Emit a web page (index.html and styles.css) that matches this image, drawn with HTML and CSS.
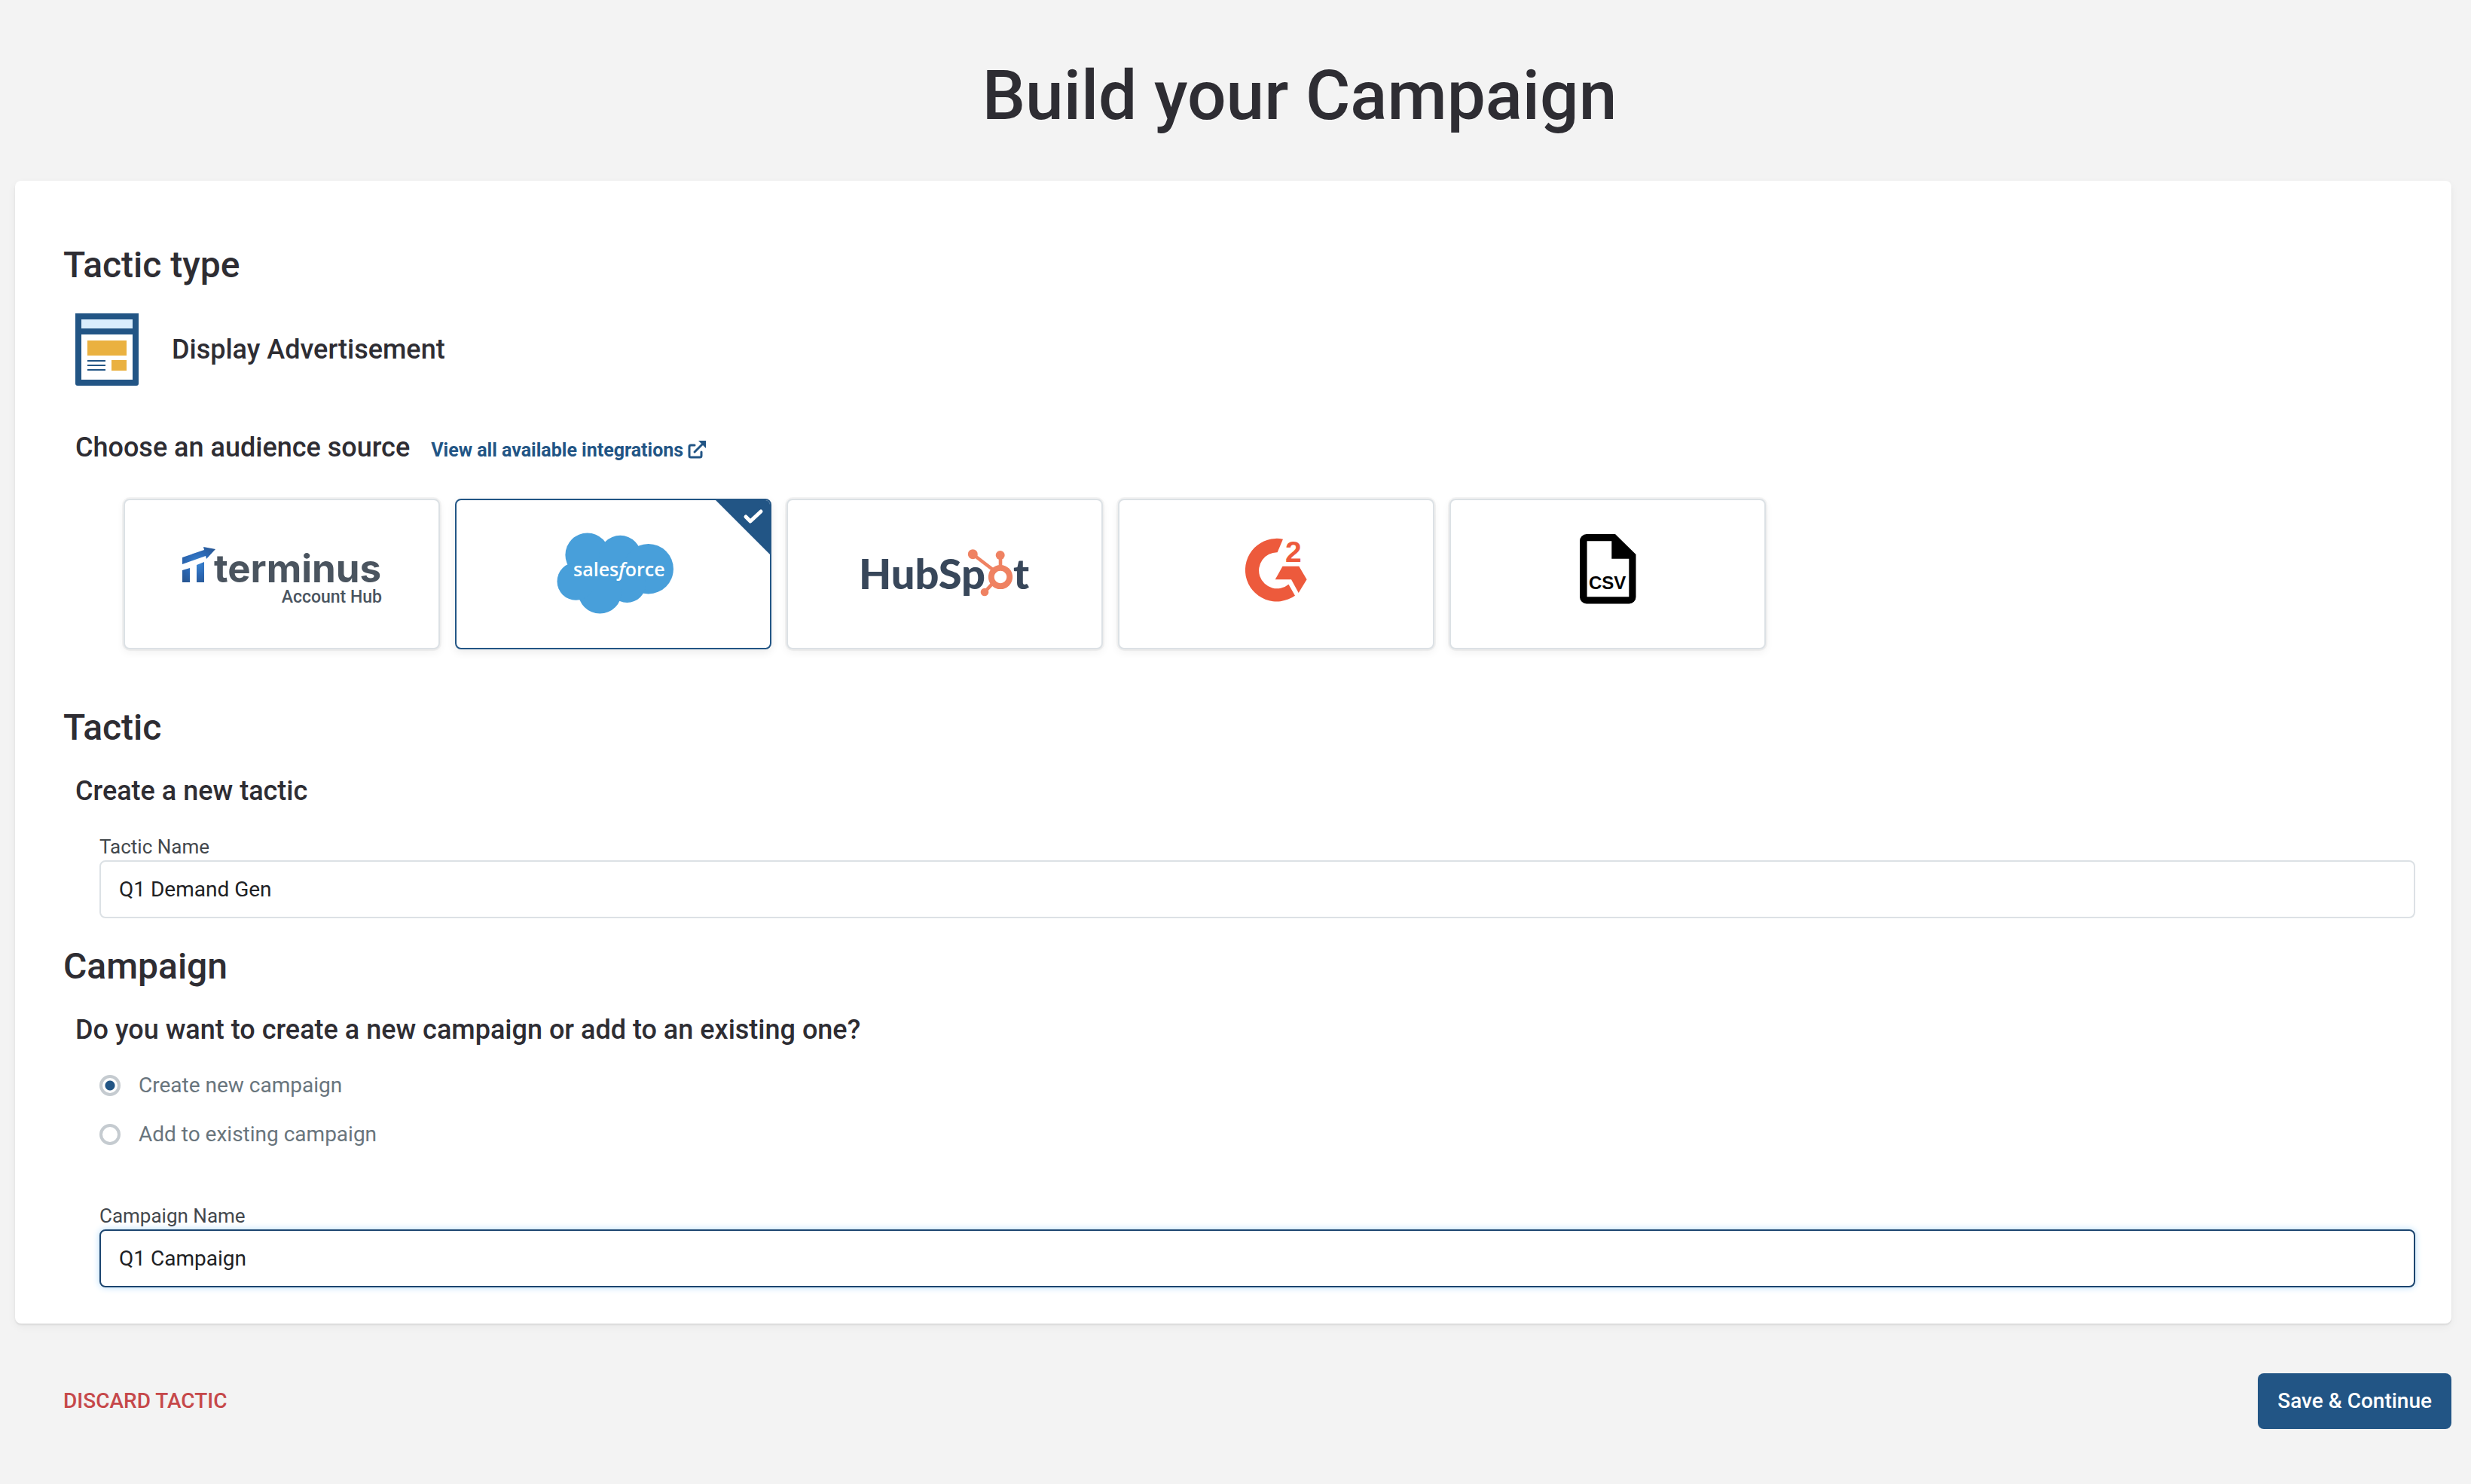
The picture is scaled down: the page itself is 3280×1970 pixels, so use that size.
FILE: index.html
```
<!DOCTYPE html>
<html lang="en">
<head>
  <title>Build your Campaign</title>
  <meta charset="UTF-8">
  <meta name="viewport" content="width=device-width, initial-scale=1">
  <link rel="stylesheet" href="styles.css">
</head>
<body>
  <header class="page-header">
    <h1>Build your Campaign</h1>
  </header>

  <form id="tacticForm" class="panel">
    <section class="section">
      <h2>Tactic type</h2>
      <div class="tactic-type">
        <svg class="ad-icon" viewBox="0 0 84 96" aria-hidden="true">
          <path fill="#225585" d="M0 0h84v93a3 3 0 0 1-3 3H3a3 3 0 0 1-3-3z"/>
          <path fill="#d9edfd" d="M8 8h68v12H8z"/>
          <path fill="#fff" d="M8 28h68v60H8z"/>
          <path fill="#eab140" d="M16 36h52v20H16zM48 62h20v14H48z"/>
          <path fill="#225585" d="M16 62h24v2H16zM16 68h24v2H16zM16 74h24v2H16z"/>
        </svg>
        <h3>Display Advertisement</h3>
      </div>

      <div class="source-title">
        <h3>Choose an audience source</h3>
        <a href="#integrations">View all available integrations
          <svg class="link-icon" viewBox="0 0 24 24" aria-hidden="true">
            <path d="M9 6H4a2 2 0 0 0-2 2v12a2 2 0 0 0 2 2h12a2 2 0 0 0 2-2v-5M9 15 20 4"/>
            <path class="head" d="M14 0h10v10z"/>
          </svg>
        </a>
      </div>

      <div class="sources">
        <button type="button" class="source" aria-label="Terminus Account Hub">
          <svg viewBox="0 0 416 196">
            <defs>
              <radialGradient id="tg" gradientUnits="userSpaceOnUse" cx="96" cy="84" r="30">
                <stop offset="0" stop-color="#3c86d2"/>
                <stop offset=".5" stop-color="#2c69b6"/>
                <stop offset="1" stop-color="#285691"/>
              </radialGradient>
            </defs>
            <path fill="url(#tg)" d="M76 76l29-10-1-4 16 3-12 13-1-4-31 11zM76 93l10-3v19H76zM95 86l10-4v27H95z"/>
            <text class="terminus" x="118" y="109">terminus</text>
            <text class="hub" x="341" y="136" text-anchor="end">Account Hub</text>
          </svg>
        </button>

        <button type="button" class="source selected" aria-label="Salesforce" aria-pressed="true">
          <svg viewBox="0 0 416 196">
            <g fill="#489fda">
              <circle cx="173.7" cy="72.7" r="29.3"/>
              <circle cx="217.3" cy="74.7" r="27.9"/>
              <circle cx="254.7" cy="91.2" r="33.2"/>
              <circle cx="226.3" cy="111" r="25"/>
              <circle cx="190.3" cy="121.5" r="29"/>
              <circle cx="158.5" cy="107.7" r="25"/>
              <path d="M165 78h75v40h-75z"/>
            </g>
            <text class="salesforce" x="155" y="101">sales<tspan font-style="italic">f</tspan>orce</text>
            <path fill="#225585" d="M344 0h72v72z"/>
            <path class="check" d="M384 22l6 6 14-13"/>
          </svg>
        </button>

        <button type="button" class="source" aria-label="HubSpot">
          <svg viewBox="0 0 416 196">
            <text class="hubspot" x="94" y="118">HubSp</text>
            <text class="hubspot" x="299" y="118">t</text>
            <g fill="#ef8262">
              <circle cx="281.7" cy="73" r="6"/>
              <circle cx="245.3" cy="71.7" r="6.5"/>
              <circle cx="261" cy="122" r="5.3"/>
            </g>
            <g fill="none" stroke="#ef8262">
              <circle cx="282" cy="102" r="12.2" stroke-width="7.8"/>
              <path stroke-width="4.6" d="M282 73v16M245.3 71.7 273 93M261 122l11-12"/>
            </g>
          </svg>
        </button>

        <button type="button" class="source" aria-label="G2">
          <svg viewBox="0 0 416 196">
            <g fill="#ed5a3c">
              <path d="M217 51.7A41.8 41.8 0 1 0 233 126.7L224.5 111.7A24 24 0 1 1 209.6 69.3z"/>
              <path d="M216.5 87.7h21.8l10.3 17.6-10.9 17.7-9.7-17.7h-21.3z"/>
              <text class="two" x="220" y="82">2</text>
            </g>
          </svg>
        </button>

        <button type="button" class="source" aria-label="CSV">
          <svg viewBox="0 0 416 196">
            <path fill-rule="evenodd" d="M180 45h38l27.5 27v56.500a9 9 0 0 1-9 9H180a9 9 0 0 1-9-9V54a9 9 0 0 1 9-9zM180.600 54.300v74h55.700V77.700h-23V54.300z"/>
            <text class="csv" x="183" y="118">CSV</text>
          </svg>
        </button>
      </div>
    </section>

    <section class="section">
      <h2>Tactic</h2>
      <h3>Create a new tactic</h3>
      <div class="field">
        <label for="tacticName">Tactic Name</label>
        <input id="tacticName" type="text" name="tacticName" value="Q1 Demand Gen">
      </div>
    </section>

    <section class="section">
      <h2>Campaign</h2>
      <h3>Do you want to create a new campaign or add to an existing one?</h3>
      <div class="options">
        <label class="option"><input type="radio" name="campaignMode" value="new" checked>Create new campaign</label>
        <label class="option"><input type="radio" name="campaignMode" value="existing">Add to existing campaign</label>
      </div>
      <div class="field">
        <label for="campaignName">Campaign Name</label>
        <input id="campaignName" class="active" type="text" name="campaignName" value="Q1 Campaign">
      </div>
    </section>
  </form>

  <footer class="actions">
    <button type="button" class="discard">DISCARD TACTIC</button>
    <button type="submit" form="tacticForm" class="save">Save &amp; Continue</button>
  </footer>
</body>
</html>
```
FILE: styles.css
```
* {
  box-sizing: border-box;
}
body {
  margin: 0;
  background: #f3f3f3;
  color: #2e2d33;
  font-family: Roboto, "Liberation Sans", sans-serif;
}
h1,
h2,
h3 {
  margin: 0;
  font-weight: 500;
}
h1 {
  font-size: 91px;
  line-height: 108px;
}
h2 {
  font-size: 48px;
  line-height: 56px;
}
h3 {
  font-size: 36px;
  line-height: 44px;
}
button,
input {
  font-family: inherit;
}
.page-header {
  padding: 73px 0 59px 170px;
  text-align: center;
}
.panel {
  margin: 0 26px 0 20px;
  padding: 84px 48px 48px 64px;
  background: #fff;
  border-radius: 8px;
  box-shadow: 0 2px 2px rgba(0, 0, 0, 0.08), 0 4px 12px rgba(0, 0, 0, 0.05);
}
.section > h3,
.source-title {
  padding-left: 16px;
}
.section > h3 {
  margin-top: 34px;
}
.section + .section {
  margin-top: 36px;
}
.section:first-child {
  margin-bottom: 76px;
}

/* tactic type + audience source */
.tactic-type {
  display: flex;
  align-items: center;
  gap: 44px;
  padding: 36px 0 0 16px;
}
.ad-icon {
  width: 84px;
  height: 96px;
}
.source-title {
  display: flex;
  align-items: baseline;
  gap: 28px;
  margin: 60px 0 46px;
}
.source-title a {
  color: #225585;
  font-size: 25px;
  font-weight: 700;
  text-decoration: none;
}
.link-icon {
  width: 24px;
  height: 24px;
  vertical-align: -3px;
  fill: none;
  stroke: #225585;
  stroke-width: 3;
  stroke-linecap: round;
}
.link-icon .head {
  fill: #225585;
  stroke: none;
}
.sources {
  display: flex;
  flex-wrap: wrap;
  gap: 20px;
  padding-left: 80px;
}
.source {
  width: 420px;
  height: 200px;
  padding: 0;
  overflow: hidden;
  background: #fff;
  border: 2px solid #dce1e5;
  border-radius: 8px;
  box-shadow: 0 0 0 2px rgba(0, 0, 0, 0.04), 0 4px 12px rgba(0, 0, 0, 0.06);
}
.source svg {
  display: block;
  width: 100%;
  height: 100%;
}
.source.selected {
  border-color: #225585;
  box-shadow: 0 4px 12px rgba(0, 0, 0, 0.08);
}
.check {
  fill: none;
  stroke: #fff;
  stroke-width: 5;
  stroke-linecap: round;
  stroke-linejoin: round;
}
.terminus {
  fill: #4a545f;
  font: 700 51px Inter, sans-serif;
}
.hub {
  fill: #4a545f;
  font: 500 23px Roboto, sans-serif;
}
.salesforce {
  fill: #fff;
  font: 600 25px "Open Sans", sans-serif;
}
.hubspot {
  fill: #38475a;
  font: 900 56px Lato, sans-serif;
}
.two {
  font: 700 39px "Liberation Sans", sans-serif;
}
.csv {
  font: 700 24px "Liberation Sans", sans-serif;
}

/* form fields */
.field {
  margin-top: 34px;
  padding-left: 48px;
}
.field label {
  display: block;
  color: #43484d;
  font-size: 26px;
  line-height: 36px;
}
.field input {
  display: block;
  width: 100%;
  height: 77px;
  padding: 0 24px;
  color: #202124;
  font-size: 28px;
  background: #fff;
  border: 2px solid #dce1e5;
  border-radius: 8px;
  outline: none;
}
.field input:focus,
.field input.active {
  border-color: #1c456f;
  box-shadow: 0 0 10px #b5dcfa;
}
.options {
  display: flex;
  flex-direction: column;
  align-items: flex-start;
  gap: 25px;
  margin-top: 32px;
  padding-left: 48px;
}
.option {
  display: flex;
  align-items: center;
  gap: 24px;
  color: #69757d;
  font-size: 28px;
  line-height: 40px;
}
.option input {
  appearance: none;
  width: 28px;
  height: 28px;
  margin: 0;
  border: 4px solid #c5cbd0;
  border-radius: 50%;
}
.option input:checked {
  background: radial-gradient(circle, #225585 6px, #fff 7px);
}
.options + .field {
  margin-top: 70px;
}

.actions {
  display: flex;
  align-items: center;
  justify-content: space-between;
  padding: 66px 26px 72px 84px;
}
.actions button {
  padding: 0;
  border: 0;
  background: none;
  font-size: 28px;
  font-weight: 500;
  line-height: 74px;
}
.actions .discard {
  color: #c6484a;
}
.actions .save {
  padding: 0 26px;
  border-radius: 8px;
  background: #225585;
  color: #fff;
}
```
